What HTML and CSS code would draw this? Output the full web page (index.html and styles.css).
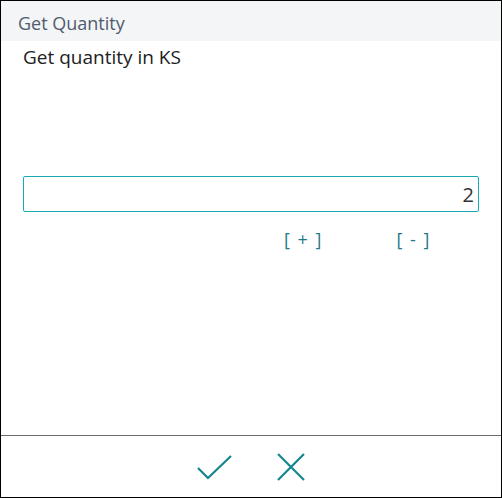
FILE: index.html
```html
<!DOCTYPE html>
<html lang="en">
<head>
    <meta charset="UTF-8">
    <title>Get Quantity</title>
    <link rel="stylesheet" href="styles.css">
</head>
<body>
    <div class="dialog">
        <div class="dialog-title">Get Quantity</div>

        <div class="dialog-body">
            <p class="prompt">Get quantity in KS</p>
            <input class="qty-input" type="text" value="2">
            <div class="qty-actions">
                <span class="qty-btn">[ + ]</span>
                <span class="qty-btn">[ - ]</span>
            </div>
        </div>

        <div class="dialog-footer">
            <button class="icon-btn" title="OK">
                <svg width="36" height="26" viewBox="0 0 36 26">
                    <path d="M1 14 L11 24 L34 2" fill="none" stroke="#14868f" stroke-width="2.2"/>
                </svg>
            </button>
            <button class="icon-btn" title="Cancel">
                <svg width="28" height="28" viewBox="0 0 28 28">
                    <path d="M1 1 L27 27 M27 1 L1 27" fill="none" stroke="#14868f" stroke-width="2.2"/>
                </svg>
            </button>
        </div>
    </div>
</body>
</html>
```

FILE: styles.css
```css
/* Global styles */
body {
    margin: 0;
    padding: 0;
    font-family: 'Open Sans', 'Noto Sans', sans-serif;
    background-color: #fff;
    color: #212121;
}

.dialog {
    box-sizing: border-box;
    width: 502px;
    height: 498px;
    border: 1px solid #000;
    display: flex;
    flex-direction: column;
}

.dialog-title {
    box-sizing: border-box;
    height: 40px;
    background-color: #f4f5f7;
    color: #505c6d;
    font-size: 18px;
    line-height: 24px;
    padding: 10px 0 0 17px;
}

.dialog-body {
    flex: 1;
    padding: 0 22px;
}

.prompt {
    margin: 3px 0 0 0;
    font-size: 19px;
    line-height: 26px;
}

.qty-input {
    box-sizing: border-box;
    display: block;
    width: 456px;
    height: 36px;
    margin-top: 106px;
    border: 1px solid #17a9b5;
    border-radius: 2px;
    padding: 0 4px;
    text-align: right;
    font-family: inherit;
    font-size: 20px;
    color: #333;
    outline: none;
}

.qty-actions {
    display: flex;
    margin-top: 15px;
    padding-left: 261px;
    gap: 75px;
}

.qty-btn {
    color: #1f7a87;
    font-size: 18px;
    word-spacing: 3px;
    cursor: pointer;
}

.dialog-footer {
    height: 61px;
    border-top: 1px solid #6b6b6b;
    display: flex;
    justify-content: center;
    align-items: center;
    gap: 44px;
}

.icon-btn {
    background: none;
    border: none;
    padding: 0;
    display: flex;
    cursor: pointer;
}
```
